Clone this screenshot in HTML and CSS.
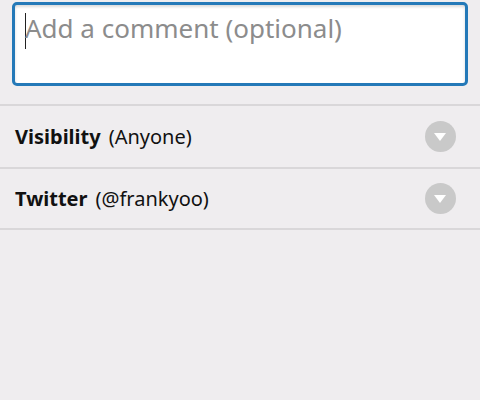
FILE: index.html
```html
<!DOCTYPE html>
<html lang="en">
<head>
	<meta charset="UTF-8">
	<title>Share</title>
	<link rel="stylesheet" href="styles.css">
</head>
<body>
	<div class="comment">
		<div class="comment-box">
			<span class="caret"></span>
			<span class="placeholder">Add a comment (optional)</span>
		</div>
	</div>
	<ul class="options">
		<li class="option">
			<span class="label">Visibility</span>
			<span class="value">(Anyone)</span>
			<span class="spinner"></span>
		</li>
		<li class="option">
			<span class="label">Twitter</span>
			<span class="value">(@frankyoo)</span>
			<span class="spinner"></span>
		</li>
	</ul>
</body>
</html>
```

FILE: styles.css
```css
*{
	margin: 0;
	padding: 0;
	box-sizing: border-box;
}
body{
	width: 480px;
	height: 400px;
	background-color: #efedef;
	font-family: "Noto Sans", "Open Sans", sans-serif;
	overflow: hidden;
}
.comment{
	padding: 2px 12px 18px 12px;
}
.comment-box{
	height: 84px;
	background-color: #fff;
	border: 3px solid #2479b8;
	border-radius: 5px;
	box-shadow: inset 0 2px 3px rgba(0,0,0,0.15);
	display: flex;
	align-items: flex-start;
	padding: 3px 0 0 10px;
}
.caret{
	width: 1px;
	height: 36px;
	margin-top: 5px;
	background-color: #222;
}
.placeholder{
	font-size: 26px;
	line-height: 40px;
	color: #8c8c8c;
	margin-left: -1px;
}
.options{
	list-style: none;
}
.option{
	height: 63px;
	border-top: 2px solid #d9d7d9;
	display: flex;
	align-items: center;
	padding: 0 24px 0 15px;
	font-size: 20px;
	color: #111;
}
.option:last-child{
	border-bottom: 2px solid #d9d7d9;
}
.label{
	font-weight: bold;
	margin-right: 8px;
}
.value{
	flex: 1;
}
.spinner{
	width: 31px;
	height: 31px;
	border-radius: 50%;
	background-color: #c9c9c9;
	position: relative;
}
.spinner::after{
	content: "";
	position: absolute;
	left: 9px;
	top: 12px;
	border-left: 6.5px solid transparent;
	border-right: 6.5px solid transparent;
	border-top: 8px solid #fff;
}
```
